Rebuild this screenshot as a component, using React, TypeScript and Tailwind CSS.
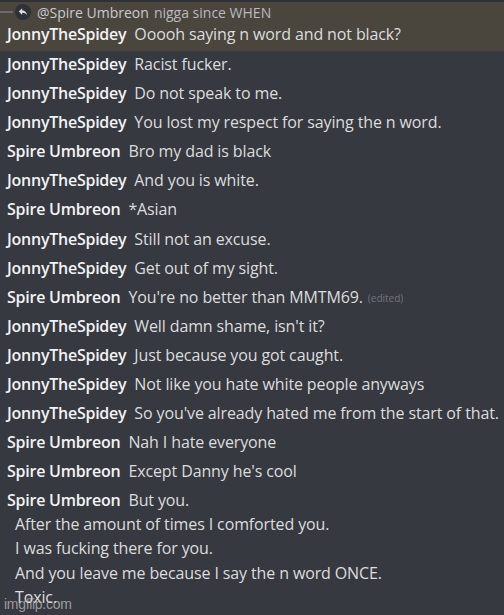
const msgs: { name: string; text: string; edited?: boolean }[] = [
  { name: "JonnyTheSpidey", text: "Racist fucker." },
  { name: "JonnyTheSpidey", text: "Do not speak to me." },
  { name: "JonnyTheSpidey", text: "You lost my respect for saying the n word." },
  { name: "Spire Umbreon", text: "Bro my dad is black" },
  { name: "JonnyTheSpidey", text: "And you is white." },
  { name: "Spire Umbreon", text: "*Asian" },
  { name: "JonnyTheSpidey", text: "Still not an excuse." },
  { name: "JonnyTheSpidey", text: "Get out of my sight." },
  { name: "Spire Umbreon", text: "You're no better than MMTM69.", edited: true },
  { name: "JonnyTheSpidey", text: "Well damn shame, isn't it?" },
  { name: "JonnyTheSpidey", text: "Just because you got caught." },
  { name: "JonnyTheSpidey", text: "Not like you hate white people anyways" },
  { name: "JonnyTheSpidey", text: "So you've already hated me from the start of that." },
  { name: "Spire Umbreon", text: "Nah I hate everyone" },
  { name: "Spire Umbreon", text: "Except Danny he's cool" },
  { name: "Spire Umbreon", text: "But you." },
];

const extra = [
  "After the amount of times I comforted you.",
  "I was fucking there for you.",
  "And you leave me because I say the n word ONCE.",
  "Toxic.",
];

function Line({ name, text, edited }: { name: string; text: string; edited?: boolean }) {
  return (
    <div className="flex h-[24.5px] items-center whitespace-nowrap pl-[7px] leading-[24.5px]">
      <span className="font-semibold tracking-[-0.25px] text-[#f2f3f5]">{name}</span>
      <span className="ml-[8px] tracking-[-0.12px] text-[#dcddde]">{text}</span>
      {edited && <span className="ml-[5px] mt-[2px] text-[10px] text-[#72767d]">(edited)</span>}
    </div>
  );
}

export default function App() {
  return (
    <div
      className="relative h-[615px] w-[504px] overflow-hidden bg-[#36393f] text-[16px]"
      style={{ fontFamily: '"Open Sans", "Noto Sans", sans-serif' }}
    >
      {/* mention highlight */}
      <div className="border-t-2 border-[#2f3136] bg-[#4a453d] pb-[4px]">
        <div className="flex h-[20px] items-center whitespace-nowrap text-[14px]">
          <div className="h-[2px] w-[13px] bg-[#6a6c70]" />
          <div className="ml-[2px] flex h-[16px] w-[16px] items-center justify-center rounded-full bg-[#2f3136]">
            <svg width="10" height="10" viewBox="0 0 24 24" fill="#dcddde">
              <path d="M10 8V3L2 11l8 8v-5c5 0 9 1.5 12 6-1-6-5-11.5-12-12z" />
            </svg>
          </div>
          <span className="ml-[6px] text-[#c9cbce]">@Spire Umbreon</span>
          <span className="ml-[5px] text-[#b9bbbe]">nigga since WHEN</span>
        </div>
        <Line name="JonnyTheSpidey" text="Ooooh saying n word and not black?" />
      </div>

      {msgs.map((m, i) => (
        <div key={i} className={i === 0 ? "pt-[1.5px]" : "pt-[4.6px]"}>
          <Line {...m} />
        </div>
      ))}

      <div className="-mt-[1px] pl-[15px] tracking-[-0.12px] text-[#dcddde]">
        {extra.map((t, i) => (
          <div key={i} className="whitespace-nowrap leading-[24.3px]">
            {t}
          </div>
        ))}
      </div>

      {/* watermark */}
      <div
        className="absolute bottom-[4px] left-[4px] text-[14px] leading-none tracking-[-0.3px] text-[#c8c8c8]/70"
        style={{ fontFamily: '"Liberation Sans", sans-serif' }}
      >
        imgflip.com
      </div>
    </div>
  );
}
